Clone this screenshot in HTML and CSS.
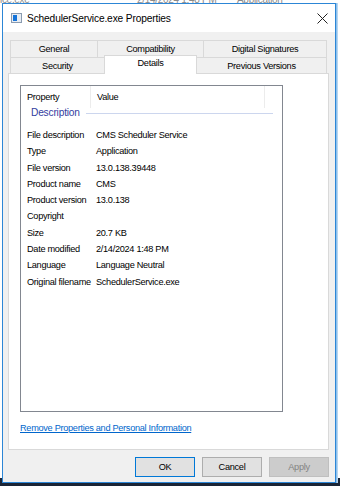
FILE: index.html
```html
<!DOCTYPE html>
<html>
<head>
<meta charset="utf-8">
<link rel="stylesheet" href="styles.css">
</head>
<body>
<div class="desk">
  <div class="bgrow"><span class="bg1">ice.exe</span><span class="bg2">2/14/2024 1:48 PM</span><span class="bg3">Application</span></div>
  <div class="win">
    <div class="titlebar">
      <svg class="appicon" width="11" height="10" viewBox="0 0 11 10">
        <rect x="0.5" y="0.5" width="10" height="9" fill="#e8edf3" stroke="#8a9bb0"/>
        <rect x="2" y="2" width="4" height="6" fill="#1473d9"/>
      </svg>
      <span class="title">SchedulerService.exe Properties</span>
      <svg class="close" width="11" height="11" viewBox="0 0 11 11">
        <path d="M0.5 0.5 L10.5 10.5 M10.5 0.5 L0.5 10.5" stroke="#222" stroke-width="1" fill="none"/>
      </svg>
    </div>
    <div class="body">
      <div class="tabs">
        <div class="tabrow">
          <div class="tab t-general">General</div>
          <div class="tab t-compat">Compatibility</div>
          <div class="tab t-digsig">Digital Signatures</div>
        </div>
        <div class="tabrow row2">
          <div class="tab t-security">Security</div>
          <div class="tab t-details sel">Details</div>
          <div class="tab t-prev">Previous Versions</div>
        </div>
      </div>
      <div class="panel">
        <div class="listview">
          <div class="lvhead">
            <div class="hcol c1">Property</div>
            <div class="hcol c2">Value</div>
            <div class="hcol c3"></div>
          </div>
          <div class="group"><span class="gname">Description</span><span class="gline"></span></div>
          <div class="row"><span class="k">File description</span><span class="v">CMS Scheduler Service</span></div>
          <div class="row"><span class="k">Type</span><span class="v">Application</span></div>
          <div class="row"><span class="k">File version</span><span class="v">13.0.138.39448</span></div>
          <div class="row"><span class="k">Product name</span><span class="v">CMS</span></div>
          <div class="row"><span class="k">Product version</span><span class="v">13.0.138</span></div>
          <div class="row"><span class="k">Copyright</span><span class="v"></span></div>
          <div class="row"><span class="k">Size</span><span class="v">20.7 KB</span></div>
          <div class="row"><span class="k">Date modified</span><span class="v">2/14/2024 1:48 PM</span></div>
          <div class="row"><span class="k">Language</span><span class="v">Language Neutral</span></div>
          <div class="row"><span class="k">Original filename</span><span class="v">SchedulerService.exe</span></div>
        </div>
        <a class="link" href="#">Remove Properties and Personal Information</a>
      </div>
      <div class="buttons">
        <div class="btn ok">OK</div>
        <div class="btn">Cancel</div>
        <div class="btn dis">Apply</div>
      </div>
    </div>
  </div>
  <div class="taskbar"></div>
</div>
</body>
</html>
```
FILE: styles.css
```css
* { box-sizing: border-box; }
html, body { margin: 0; padding: 0; }
body {
  width: 340px;
  height: 486px;
  overflow: hidden;
  background: #ffffff;
  font-family: "Liberation Sans", Arial, sans-serif;
  font-size: 9.2px;
  letter-spacing: -0.3px;
  color: #000;
}
.desk {
  position: relative;
  width: 340px;
  height: 486px;
  display: flex;
  flex-direction: column;
}
.bgrow {
  height: 483px;
  margin-top: -5px;
  font-size: 10px;
  line-height: 10px;
  color: #8a8a8a;
  display: flex;
}
.bg1 { width: 137px; }
.bg2 { width: 100px; }
.taskbar {
  height: 8px;
  background: #1b2536;
}
.win {
  position: absolute;
  left: 2px;
  top: 3px;
  width: 334px;
  height: 480px;
  border: 1px solid #2c86d6;
  background: #f0f0f0;
  box-shadow: 1px 0 0 #8ec1ec, 2px 0 0 #b7d6f1;
  display: flex;
  flex-direction: column;
}
.titlebar {
  height: 28px;
  background: #ffffff;
  display: flex;
  align-items: center;
  padding-left: 8px;
  padding-right: 7px;
}
.appicon { flex: none; margin-right: 5px; }
.title {
  flex: 1;
  font-size: 10.2px;
  letter-spacing: -0.15px;
  color: #000;
}
.close { flex: none; }
.body {
  flex: 1;
  padding: 8px 6px 0 5px;
  display: flex;
  flex-direction: column;
}
.tabs {
  padding: 0 2px;
  position: relative;
  z-index: 2;
}
.tabrow { display: flex; }
.tab {
  height: 17px;
  border: 1px solid #d9d9d9;
  border-bottom: none;
  background: #f0f0f0;
  text-align: center;
  line-height: 16px;
  margin-left: -1px;
  white-space: nowrap;
  color: #000;
}
.tab:first-child { margin-left: 0; }
.row2 .tab { height: 16px; line-height: 16px; }
.t-general { width: 88px; }
.t-compat { width: 107px; }
.t-digsig { flex: 1; }
.t-security { width: 95px; }
.t-details { width: 93px; }
.t-prev { flex: 1; }
.tab.sel {
  background: #ffffff;
  height: 19px;
  margin-top: -2px;
  margin-bottom: -1px;
  line-height: 15px;
  position: relative;
  z-index: 3;
}
.panel {
  height: 377px;
  background: #ffffff;
  border: 1px solid #d9d9d9;
  padding: 11px 11px 0 11px;
  display: flex;
  flex-direction: column;
  align-items: flex-start;
}
.listview {
  width: 263px;
  height: 327px;
  border: 1px solid #828790;
  flex: none;
}
.lvhead {
  display: flex;
  height: 22px;
}
.hcol {
  line-height: 22px;
  padding-left: 6px;
  border-right: 1px solid #ececec;
}
.c1 { width: 70px; }
.c2 { width: 174px; }
.c3 { flex: 1; border-right: none; }
.group {
  display: flex;
  align-items: center;
  height: 10px;
  padding-left: 10px;
  padding-right: 9px;
  margin-bottom: 9px;
}
.gname {
  color: #3440a0;
  font-size: 10.2px;
  letter-spacing: -0.2px;
  line-height: 10px;
  margin-right: 6px;
}
.gline {
  flex: 1;
  height: 1px;
  background: #ccd6ee;
}
.row {
  display: flex;
  height: 16.3px;
  line-height: 16.3px;
  white-space: nowrap;
}
.k { width: 75px; padding-left: 6px; }
.v { flex: 1; }
.link {
  margin-top: 10px;
  color: #0066cc;
  text-decoration: underline;
  line-height: 12px;
}
.buttons {
  display: flex;
  justify-content: flex-end;
  gap: 7px;
  margin-top: 7px;
}
.btn {
  width: 60px;
  height: 20px;
  border: 1px solid #adadad;
  background: #e1e1e1;
  text-align: center;
  line-height: 18px;
  color: #000;
}
.btn.ok { border-color: #0078d7; }
.btn.dis { background: #cccccc; border-color: #bfbfbf; color: #838383; }
```
